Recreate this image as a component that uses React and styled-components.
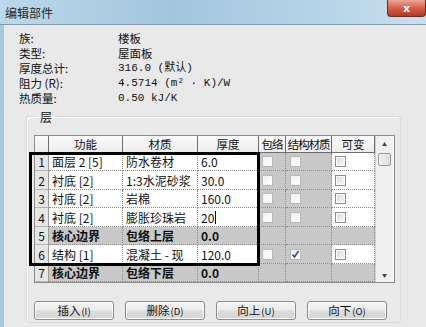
import React from "react";
import styled, { createGlobalStyle } from "styled-components";

const GlobalStyle = createGlobalStyle`
  html, body {
    margin: 0;
    padding: 0;
    width: 426px;
    height: 327px;
    overflow: hidden;
    background: #e9e9e9;
  }
  body {
    font-family: "Noto Sans CJK SC", "Noto Sans", sans-serif;
    font-size: 12px;
    color: #111;
  }
`;

const Window = styled.div`
  width: 426px;
  height: 327px;
  display: flex;
  flex-direction: column;
  background: #e9e9e9;
  border-left: 4px solid #a7c8de;
  box-sizing: border-box;
`;

const TitleBar = styled.div`
  height: 25px;
  flex: none;
  display: flex;
  align-items: center;
  background: linear-gradient(90deg, #bcd8ea 0%, #a3c6dd 40%, #b6d4e8 75%, #c8dfee 100%);
  border-bottom: 1px solid #7d98ab;
  box-sizing: border-box;
  position: relative;
  margin-left: -4px;
  padding-left: 5px;
`;

const Title = styled.span`
  font-size: 12px;
  color: #1d2a33;
`;

const CloseButton = styled.div`
  position: absolute;
  right: 0;
  top: 0;
  width: 39px;
  height: 17px;
  border-radius: 0 0 4px 4px;
  background: linear-gradient(180deg, #e9a797 0%, #d4604a 50%, #bb3522 100%);
  border: 1px solid #6e2a22;
  border-top: none;
  display: flex;
  align-items: center;
  justify-content: center;
  color: #fff;
  font-family: "DejaVu Sans", sans-serif;
  font-weight: bold;
  font-size: 11px;
  line-height: 1;
  box-sizing: border-box;
`;

const Body = styled.div`
  flex: 1;
  padding: 6px 0 0 15px;
  display: flex;
  flex-direction: column;
`;

const InfoGrid = styled.div`
  display: grid;
  grid-template-columns: 99px auto;
  grid-auto-rows: 14.8px;
  align-items: center;
`;

const InfoLabel = styled.div`
  font-size: 11.5px;
  line-height: 14px;
`;

const InfoValue = styled.div`
  font-family: ${(p) => (p.$mono ? '"Liberation Mono", "Noto Sans CJK SC", monospace' : '"Noto Sans CJK SC", sans-serif')};
  font-size: ${(p) => (p.$mono ? "11px" : "11.5px")};
  line-height: 14px;
  white-space: pre;
`;

const GroupBox = styled.fieldset`
  margin: 3px 0 0 7px;
  width: 375px;
  height: 215px;
  box-sizing: border-box;
  border: 1px solid #d3dbe0;
  box-shadow: inset 1px 1px 0 #fff;
  border-radius: 3px;
  padding: 7px 0 0 7px;
  position: relative;
`;

const GroupLegend = styled.legend`
  padding: 0 3px;
  margin-left: 3px;
  font-size: 12px;
`;

const TableWrap = styled.div`
  position: relative;
  display: flex;
  width: 359px;
  border: 1px solid #8d8d8d;
  background: #fff;
  margin-top: 3px;
`;

const Table = styled.div`
  display: flex;
  flex-direction: column;
`;

const cols = "14px 74px 75px 61px 27px 46px 43px";

const HeaderRow = styled.div`
  display: grid;
  grid-template-columns: ${cols};
  height: 16px;
  background: linear-gradient(180deg, #fbfbfb, #ececec);
  border-bottom: 1px solid #6d6d6d;
`;

const HeadCell = styled.div`
  border-right: 1px solid #6d6d6d;
  display: flex;
  align-items: center;
  justify-content: center;
  font-size: 11.5px;
  white-space: nowrap;
  overflow: hidden;
  letter-spacing: ${(p) => (p.$tight ? "-1px" : "0")};
`;

const Row = styled.div`
  display: grid;
  grid-template-columns: ${cols};
  height: 18.5px;
`;

const NumCell = styled.div`
  background: #e6e6e6;
  border-right: 1px solid #9a9a9a;
  border-bottom: 1px solid #b4b4b4;
  display: flex;
  align-items: center;
  justify-content: center;
  font-size: 12px;
`;

const Cell = styled.div`
  background: ${(p) => (p.$gray ? "#c8c8c8" : "#fff")};
  border-right: 1px dotted #8c8c8c;
  border-bottom: 1px dotted #8c8c8c;
  display: flex;
  align-items: center;
  padding-left: ${(p) => (p.$box ? "0" : "3px")};
  font-size: 12px;
  font-weight: ${(p) => (p.$bold ? "bold" : "normal")};
  white-space: nowrap;
  overflow: hidden;
`;

const CheckBox = styled.span`
  width: 11px;
  height: 11px;
  margin-left: ${(p) => p.$offset}px;
  box-sizing: border-box;
  border: 1px solid ${(p) => (p.$dark ? "#8e8e8e" : "#b9b9b9")};
  background: ${(p) => (p.$dark ? "linear-gradient(135deg, #d8d8d8, #fafafa)" : "linear-gradient(135deg, #f0f0f0, #ffffff)")};
  box-shadow: ${(p) => (p.$dark ? "inset 0 0 0 1px #fff" : "none")};
  display: flex;
  align-items: center;
  justify-content: center;
`;

const Caret = styled.span`
  width: 1px;
  height: 13px;
  background: #000;
  margin-left: 1px;
`;

const ScrollBar = styled.div`
  width: 17px;
  border-left: 1px solid #d0d0d0;
  background: #f0f0f0;
  display: flex;
  flex-direction: column;
  align-items: center;
`;

const Arrow = styled.div`
  height: 16px;
  display: flex;
  align-items: center;
  justify-content: center;
  font-size: 5px;
  color: #444;
`;

const Thumb = styled.div`
  width: 13px;
  height: 13px;
  margin-top: 1px;
  border: 1px solid #9c9c9c;
  border-radius: 2px;
  background: linear-gradient(90deg, #f4f4f4, #dcdcdc);
  box-sizing: border-box;
`;

const Spacer = styled.div`
  flex: 1;
`;

const Highlight = styled.div`
  position: absolute;
  left: -6px;
  top: 16px;
  width: 231px;
  height: 114px;
  border: 3px solid #000;
  box-sizing: border-box;
  pointer-events: none;
`;

const ButtonRow = styled.div`
  display: flex;
  gap: 11px;
  margin-top: 18px;
`;

const Button = styled.button`
  width: 80px;
  height: 19px;
  padding: 0;
  border: 1px solid #8a8a8a;
  border-radius: 3px;
  background: linear-gradient(180deg, #f4f4f4 0%, #ebebeb 45%, #dcdcdc 55%, #d4d4d4 100%);
  box-shadow: inset 0 0 0 1px #fcfcfc;
  font-family: "Noto Sans CJK SC", sans-serif;
  font-size: 11.5px;
  color: #111;
  line-height: 1;
`;

const Key = styled.span`
  font-size: 9.5px;
  margin-left: 1px;
`;

const Check = () => (
  <svg width="9" height="9" viewBox="0 0 9 9">
    <path d="M1.5 4.5 L3.5 7 L7.5 1" fill="none" stroke="#2c4f98" strokeWidth="1.6" />
  </svg>
);

const rows = [
  { n: 1, fn: "面层 2 [5]", mat: "防水卷材", th: "6.0" },
  { n: 2, fn: "衬底 [2]", mat: "1:3水泥砂浆", th: "30.0" },
  { n: 3, fn: "衬底 [2]", mat: "岩棉", th: "160.0" },
  { n: 4, fn: "衬底 [2]", mat: "膨胀珍珠岩", th: "20", caret: true },
  { n: 5, fn: "核心边界", mat: "包络上层", th: "0.0", core: true },
  { n: 6, fn: "结构 [1]", mat: "混凝土 - 现", th: "120.0", checked: true },
  { n: 7, fn: "核心边界", mat: "包络下层", th: "0.0", core: true },
];

const info = [
  ["族:", "楼板"],
  ["类型:", "屋面板"],
  ["厚度总计:", "316.0 (默认)", true],
  ["阻力 (R):", "4.5714 (m² · K)/W", true],
  ["热质量:", "0.50 kJ/K", true],
];

export default function App() {
  return (
    <Window>
      <GlobalStyle />
      <TitleBar>
        <Title>编辑部件</Title>
        <CloseButton>x</CloseButton>
      </TitleBar>
      <Body>
        <InfoGrid>
          {info.map(([label, value, mono]) => (
            <React.Fragment key={label}>
              <InfoLabel>{label}</InfoLabel>
              <InfoValue $mono={mono}>{value}</InfoValue>
            </React.Fragment>
          ))}
        </InfoGrid>

        <GroupBox>
          <GroupLegend>层</GroupLegend>
          <TableWrap>
            <Table>
              <HeaderRow>
                <HeadCell />
                <HeadCell>功能</HeadCell>
                <HeadCell>材质</HeadCell>
                <HeadCell>厚度</HeadCell>
                <HeadCell $tight>包络</HeadCell>
                <HeadCell $tight>结构材质</HeadCell>
                <HeadCell>可变</HeadCell>
              </HeaderRow>
              {rows.map((r) => (
                <Row key={r.n}>
                  <NumCell>{r.n}</NumCell>
                  <Cell $gray={r.core} $bold={r.core}>{r.fn}</Cell>
                  <Cell $gray={r.core} $bold={r.core}>{r.mat}</Cell>
                  <Cell $gray={r.core} $bold={r.core}>
                    {r.th}
                    {r.caret && <Caret />}
                  </Cell>
                  <Cell $gray $box>
                    {!r.core && <CheckBox $offset={3} />}
                  </Cell>
                  <Cell $gray $box>
                    {!r.core && <CheckBox $offset={4}>{r.checked && <Check />}</CheckBox>}
                  </Cell>
                  <Cell $gray={r.core} $box>
                    {!r.core && <CheckBox $dark $offset={3} />}
                  </Cell>
                </Row>
              ))}
            </Table>
            <ScrollBar>
              <Arrow>▲</Arrow>
              <Thumb />
              <Spacer />
              <Arrow>▼</Arrow>
            </ScrollBar>
            <Highlight />
          </TableWrap>

          <ButtonRow>
            <Button>
              插入<Key>(I)</Key>
            </Button>
            <Button>
              删除<Key>(D)</Key>
            </Button>
            <Button>
              向上<Key>(U)</Key>
            </Button>
            <Button>
              向下<Key>(O)</Key>
            </Button>
          </ButtonRow>
        </GroupBox>
      </Body>
    </Window>
  );
}
